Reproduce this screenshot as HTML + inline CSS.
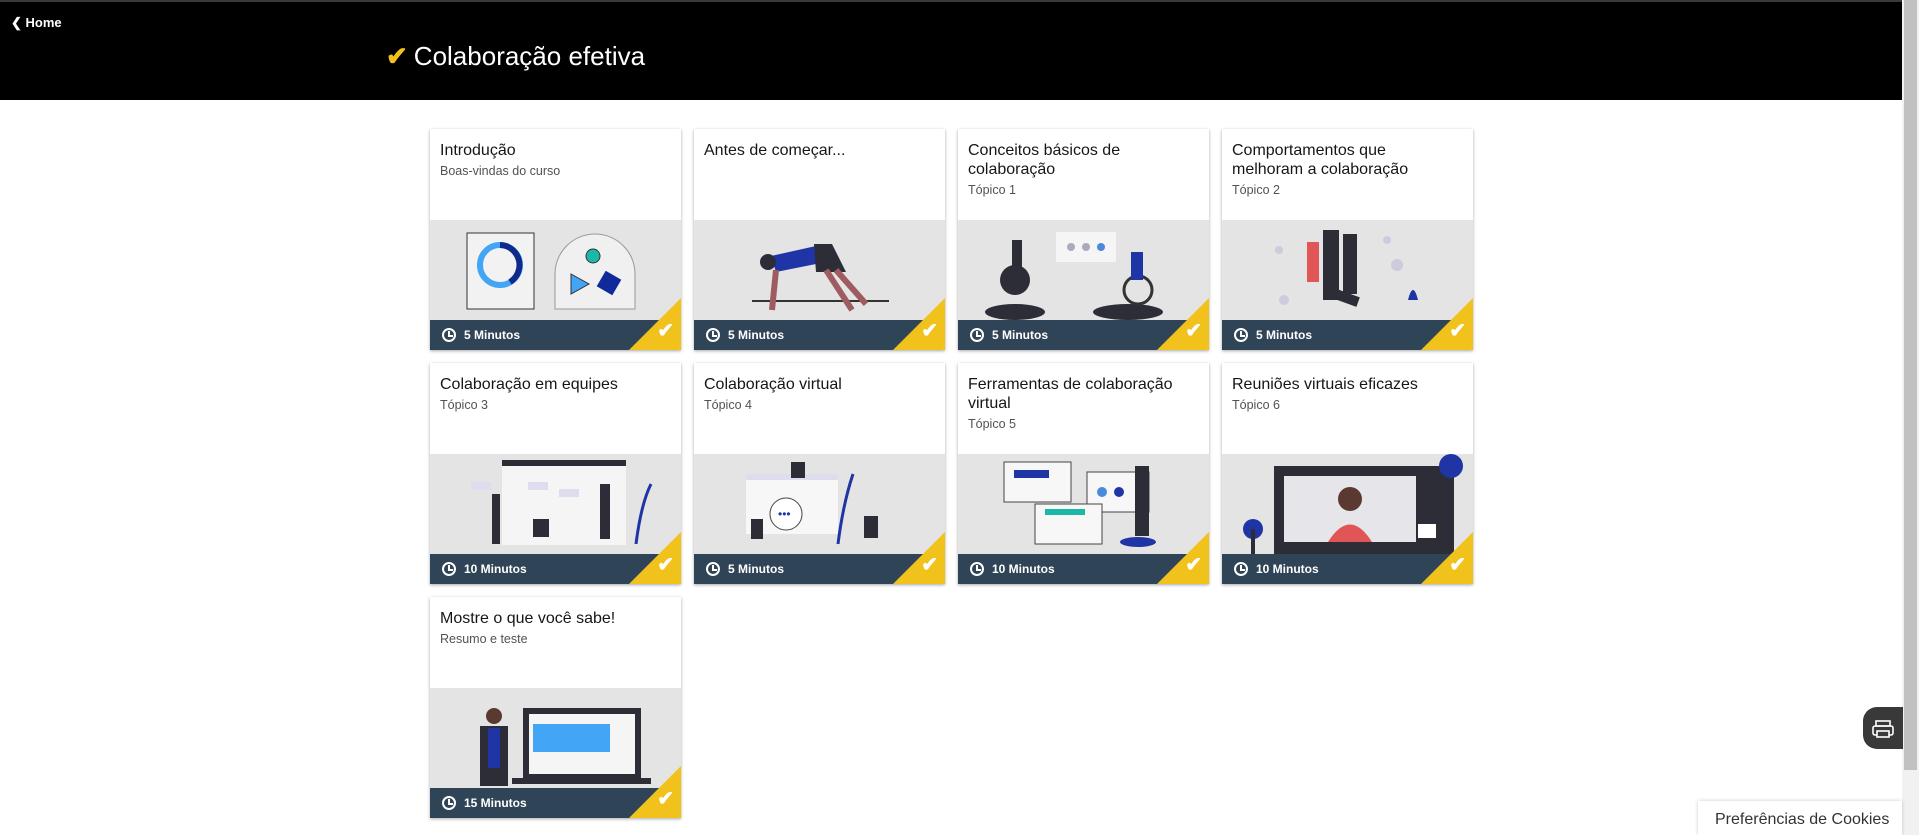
<!DOCTYPE html>
<html><head><meta charset="utf-8"><style>
*{box-sizing:border-box;margin:0;padding:0}
body{width:1919px;height:835px;overflow:hidden;background:#fff;font-family:"Liberation Sans",sans-serif;position:relative}
.top{position:absolute;left:0;top:0;width:1902px;height:100px;background:#000;border-top:2px solid #3a3a3a}
.home{position:absolute;left:11px;top:13px;color:#fff;font-size:13px;font-weight:bold}
.title{position:absolute;left:386px;top:39px;color:#fff;font-size:26px}
.title b{color:#f1c21b;margin-right:6px}
.card{position:absolute;width:251px;height:221px;background:#fff;box-shadow:0 1px 3px rgba(0,0,0,.35);overflow:hidden}
.card h3{position:absolute;left:10px;top:12px;width:215px;font-weight:normal;font-size:16px;line-height:19px;color:#161616}
.card p{position:absolute;left:10px;font-size:12.5px;color:#525252}
.img{position:absolute;left:0;top:91px;width:251px;height:100px;background:#e4e4e4}
.ft{position:absolute;left:0;top:191px;width:251px;height:30px;background:#304457;color:#fff;font-size:12px;font-weight:bold;padding:8px 0 0 34px}
.ft i{position:absolute;left:12px;top:8px;width:14px;height:14px;border:2px solid #fff;border-radius:50%}
.ft i:after{content:"";position:absolute;left:4px;top:1px;width:3px;height:4px;border-left:2px solid #fff;border-bottom:2px solid #fff}
.tri{position:absolute;right:0;bottom:0;width:0;height:0;border-left:52px solid transparent;border-bottom:52px solid #f1c21b}
.ck{position:absolute;right:7px;bottom:7px;color:#fff;font-size:20px;font-weight:bold}
.sb{position:absolute;right:0;top:0;width:17px;height:835px;background:#f1f1f1}
.sb div{position:absolute;left:2px;top:0;width:13px;height:770px;background:#c1c1c1}
.pr{position:absolute;left:1863px;top:707px;width:40px;height:42px;background:#393939;border-radius:14px 0 0 14px}
.ck2{position:absolute;left:1698px;top:801px;width:204px;height:34px;background:#fff;box-shadow:0 0 4px rgba(0,0,0,.2);font-size:16px;color:#333;padding:10px 0 0 17px}
</style></head><body>
<div class="top"><div class="home">&#10094; Home</div><div class="title"><b>&#10004;</b>Colaboração efetiva</div></div>

<div class="card" style="left:430px;top:129px"><h3>Introdução</h3><p style="top:35px">Boas-vindas do curso</p><div class="img"><svg width="251" height="100"><rect x="37" y="13" width="67" height="76" fill="#f2f2f2" stroke="#333"/><circle cx="70" cy="45" r="20" fill="none" stroke="#42a5f5" stroke-width="6"/><path d="M70 25a20 20 0 0 1 10 37" fill="none" stroke="#0f2a8a" stroke-width="6"/><path d="M125 89v-35a40 40 0 0 1 80 0v35z" fill="#f0f0f0" stroke="#999"/><circle cx="163" cy="36" r="7" fill="#1bb8a8" stroke="#333"/><path d="M141 54l18 10-18 10z" fill="#42a5f5" stroke="#333"/><rect x="170" y="54" width="18" height="18" fill="#0f2a9a" transform="rotate(30 179 63)"/></svg></div><div class="ft"><i></i>5 Minutos</div><div class="tri"></div><span class="ck">&#10004;</span></div>

<div class="card" style="left:694px;top:129px"><h3>Antes de começar...</h3><div class="img"><svg width="251" height="100"><line x1="58" y1="81" x2="195" y2="81" stroke="#333" stroke-width="2"/><path d="M77 36l45-10v18l-40 8z" fill="#1f35a5"/><path d="M120 24h18l14 28h-30z" fill="#2d2d38"/><circle cx="74" cy="42" r="8" fill="#2d2d38"/><path d="M82 50l-4 40M132 50l26 40M142 50l30 34" stroke="#9e5c60" stroke-width="6"/></svg></div><div class="ft"><i></i>5 Minutos</div><div class="tri"></div><span class="ck">&#10004;</span></div>

<div class="card" style="left:958px;top:129px"><h3>Conceitos básicos de colaboração</h3><p style="top:54px">Tópico 1</p><div class="img"><svg width="251" height="100"><rect x="98" y="12" width="60" height="30" fill="#f5f5f5"/><circle cx="113" cy="27" r="4" fill="#aab"/><circle cx="128" cy="27" r="4" fill="#aab"/><circle cx="143" cy="27" r="4" fill="#4a8ad8"/><ellipse cx="57" cy="92" rx="30" ry="8" fill="#2d2d38"/><ellipse cx="170" cy="92" rx="35" ry="8" fill="#2d2d38"/><circle cx="57" cy="60" r="15" fill="#2d2d38"/><rect x="54" y="20" width="10" height="30" fill="#2d2d38"/><circle cx="180" cy="70" r="14" fill="none" stroke="#333" stroke-width="3"/><rect x="173" y="32" width="12" height="28" fill="#1f35a5"/></svg></div><div class="ft"><i></i>5 Minutos</div><div class="tri"></div><span class="ck">&#10004;</span></div>

<div class="card" style="left:1222px;top:129px"><h3>Comportamentos que melhoram a colaboração</h3><p style="top:54px">Tópico 2</p><div class="img"><svg width="251" height="100"><circle cx="57" cy="30" r="4" fill="#ccd"/><circle cx="165" cy="20" r="4" fill="#ccd"/><circle cx="175" cy="45" r="6" fill="#ccd"/><circle cx="62" cy="80" r="5" fill="#ccd"/><rect x="85" y="22" width="12" height="40" fill="#e05555"/><rect x="101" y="10" width="16" height="70" fill="#2d2d38"/><rect x="121" y="14" width="14" height="60" fill="#2d2d38"/><rect x="107" y="72" width="30" height="10" fill="#2d2d38" transform="rotate(20 122 77)"/><path d="M186 80q5-20 10 0z" fill="#1f35a5"/></svg></div><div class="ft"><i></i>5 Minutos</div><div class="tri"></div><span class="ck">&#10004;</span></div>

<div class="card" style="left:430px;top:363px"><h3>Colaboração em equipes</h3><p style="top:35px">Tópico 3</p><div class="img"><svg width="251" height="100"><rect x="72" y="6" width="124" height="85" fill="#f5f5f5"/><rect x="72" y="6" width="124" height="6" fill="#2d2d38"/><rect x="41" y="28" width="20" height="8" fill="#dde"/><rect x="98" y="28" width="20" height="8" fill="#dde"/><rect x="129" y="35" width="20" height="8" fill="#dde"/><rect x="62" y="40" width="8" height="50" fill="#2d2d38"/><rect x="170" y="30" width="10" height="55" fill="#2d2d38"/><rect x="103" y="65" width="16" height="18" fill="#2d2d38"/><path d="M206 90q5-40 15-60" stroke="#1f35a5" stroke-width="3" fill="none"/></svg></div><div class="ft"><i></i>10 Minutos</div><div class="tri"></div><span class="ck">&#10004;</span></div>

<div class="card" style="left:694px;top:363px"><h3>Colaboração virtual</h3><p style="top:35px">Tópico 4</p><div class="img"><svg width="251" height="100"><rect x="52" y="20" width="92" height="60" fill="#f7f7f7"/><rect x="52" y="20" width="92" height="6" fill="#dde"/><circle cx="92" cy="60" r="16" fill="#fff" stroke="#444"/><text x="84" y="64" font-size="12" fill="#1f35a5">•••</text><rect x="97" y="8" width="14" height="16" fill="#2d2d38"/><rect x="57" y="65" width="12" height="20" fill="#2d2d38"/><rect x="170" y="62" width="14" height="22" fill="#2d2d38"/><path d="M144 90q5-40 15-70" stroke="#1f35a5" stroke-width="3" fill="none"/></svg></div><div class="ft"><i></i>5 Minutos</div><div class="tri"></div><span class="ck">&#10004;</span></div>

<div class="card" style="left:958px;top:363px"><h3>Ferramentas de colaboração virtual</h3><p style="top:54px">Tópico 5</p><div class="img"><svg width="251" height="100"><rect x="46" y="8" width="67" height="40" fill="#f7f7f7" stroke="#444"/><rect x="56" y="16" width="35" height="8" fill="#1f35a5"/><rect x="129" y="18" width="62" height="40" fill="#f7f7f7" stroke="#444"/><circle cx="144" cy="38" r="5" fill="#4a8ad8"/><circle cx="161" cy="38" r="5" fill="#1f35a5"/><rect x="77" y="50" width="67" height="40" fill="#f7f7f7" stroke="#444"/><rect x="87" y="55" width="40" height="6" fill="#1bb8a8"/><rect x="177" y="12" width="14" height="70" fill="#2d2d38"/><ellipse cx="180" cy="88" rx="18" ry="5" fill="#1f35a5"/></svg></div><div class="ft"><i></i>10 Minutos</div><div class="tri"></div><span class="ck">&#10004;</span></div>

<div class="card" style="left:1222px;top:363px"><h3>Reuniões virtuais eficazes</h3><p style="top:35px">Tópico 6</p><div class="img"><svg width="251" height="100"><rect x="52" y="12" width="180" height="88" fill="#2d2d38"/><rect x="62" y="22" width="132" height="66" fill="#e6e6ea"/><circle cx="128" cy="45" r="12" fill="#5a3a30"/><path d="M106 88q22-35 44 0z" fill="#e05555"/><circle cx="229" cy="12" r="12" fill="#1f35a5"/><circle cx="31" cy="75" r="10" fill="#1f35a5"/><rect x="29" y="75" width="4" height="25" fill="#2d2d38"/><rect x="196" y="70" width="18" height="14" fill="#fff"/></svg></div><div class="ft"><i></i>10 Minutos</div><div class="tri"></div><span class="ck">&#10004;</span></div>

<div class="card" style="left:430px;top:597px"><h3>Mostre o que você sabe!</h3><p style="top:35px">Resumo e teste</p><div class="img"><svg width="251" height="100"><rect x="93" y="20" width="118" height="72" fill="#2d2d38"/><rect x="99" y="26" width="106" height="60" fill="#f5f5f5"/><rect x="103" y="36" width="77" height="28" fill="#42a5f5"/><rect x="82" y="90" width="139" height="6" fill="#2d2d38"/><circle cx="64" cy="28" r="8" fill="#5a3a30"/><rect x="50" y="38" width="28" height="60" fill="#2d2d38"/><rect x="58" y="40" width="12" height="40" fill="#1f35a5"/></svg></div><div class="ft"><i></i>15 Minutos</div><div class="tri"></div><span class="ck">&#10004;</span></div>

<div class="sb"><div></div></div>
<div class="pr"><svg width="40" height="42"><rect x="13" y="14" width="14" height="5" fill="none" stroke="#fff" stroke-width="1.6"/><rect x="10" y="19" width="20" height="9" rx="2" fill="none" stroke="#fff" stroke-width="1.6"/><rect x="14" y="24" width="12" height="6" fill="#393939" stroke="#fff" stroke-width="1.6"/></svg></div>
<div class="ck2">Preferências de Cookies</div>
</body></html>
